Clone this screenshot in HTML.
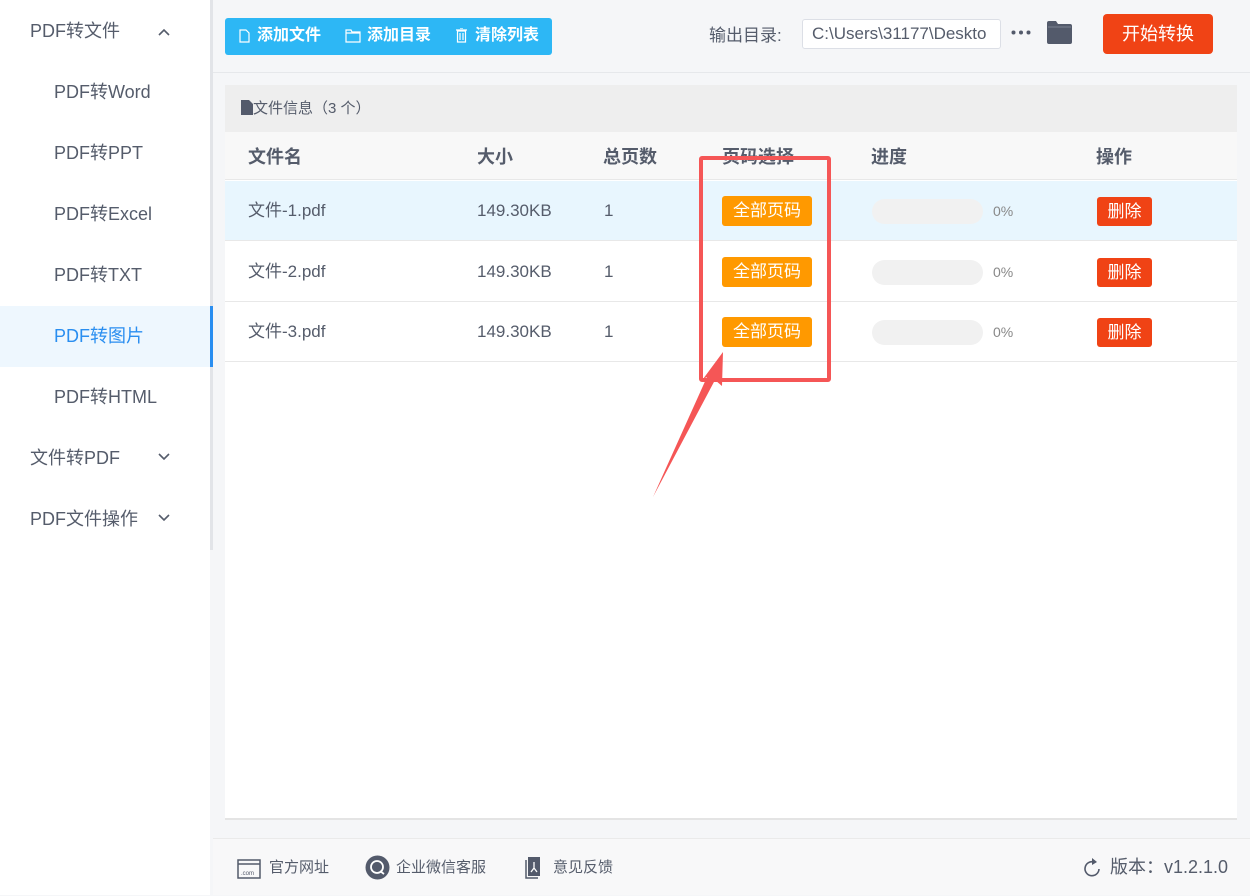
<!DOCTYPE html>
<html><head><meta charset="utf-8"><style>
*{margin:0;padding:0;box-sizing:border-box}
body{width:1250px;height:895px;overflow:hidden;background:#f5f6f8;font-family:"Liberation Sans","Noto Sans CJK SC",sans-serif;color:#555c6b;position:relative}
.side{position:absolute;left:0;top:0;width:210px;height:895px;background:#fff}
.sbar{position:absolute;left:210px;top:0;width:3px;height:550px;background:#e2e4e8}
.it{position:absolute;left:0;width:210px;height:61px;line-height:61px;font-size:18px;color:#555c6b}
.it.g{padding-left:30px}.it.s{padding-left:54px}
.it.a{background:#eef7fe;color:#2a8ef0}
.act{position:absolute;left:210px;top:306px;width:3px;height:61px;background:#2a8ef0}
.chev{position:absolute;left:158px;top:25px}
.abs{position:absolute}
.tb{left:225px;top:18px;width:327px;height:37px;background:#2db7f5;border-radius:3px;color:#fff;font-size:16px;font-weight:bold}
.tb span{position:absolute;top:8px;line-height:20px}
.hline{left:213px;top:72px;width:1037px;height:1px;background:#e6e8eb}
.panel{left:225px;top:85px;width:1012px;height:733px;background:#fff}
.ph{left:0;top:0;width:1012px;height:47px;background:#eeeeee;font-size:15px;line-height:47px;padding-left:16px}
.th{left:0;top:47px;width:1012px;height:48px;background:#f8f8f8;border-bottom:1px solid #e8e8e8;font-size:18px;font-weight:bold;line-height:50px}
.row{left:0;width:1012px;height:60px;border-bottom:1px solid #e8e8e8;font-size:17px;line-height:60px}
.c{position:absolute;top:0}
.tag{position:absolute;left:497px;top:15px;width:90px;height:30px;background:#ff9900;color:#fff;border-radius:3px;font-size:17px;line-height:30px;text-align:center}
.bar{position:absolute;left:647px;top:18px;width:111px;height:25px;border-radius:13px;background:#f1f1f1}
.pct{position:absolute;left:768px;font-size:14px;color:#888}
.del{position:absolute;left:872px;top:16px;width:55px;height:29px;background:#f04315;color:#fff;border-radius:3px;font-size:17px;line-height:29px;text-align:center}
.foot{left:213px;top:838px;width:1037px;height:57px;background:#f8f8f9;border-top:1px solid #eaeaea;font-size:15px;line-height:57px}
</style></head><body>
<div class="side">
<div class="it g" style="top:1px">PDF转文件<svg class="chev" style="top:27px" width="12" height="8" viewBox="0 0 12 8"><path d="M1 7l5-5 5 5" fill="none" stroke="#555c6b" stroke-width="1.6"/></svg></div>
<div class="it s" style="top:62px">PDF转Word</div>
<div class="it s" style="top:123px">PDF转PPT</div>
<div class="it s" style="top:184px">PDF转Excel</div>
<div class="it s" style="top:245px">PDF转TXT</div>
<div class="it s a" style="top:306px">PDF转图片</div>
<div class="it s" style="top:367px">PDF转HTML</div>
<div class="it g" style="top:428px">文件转PDF<svg class="chev" width="12" height="8" viewBox="0 0 12 8"><path d="M1 1l5 5 5-5" fill="none" stroke="#555c6b" stroke-width="1.6"/></svg></div>
<div class="it g" style="top:489px">PDF文件操作<svg class="chev" width="12" height="8" viewBox="0 0 12 8"><path d="M1 1l5 5 5-5" fill="none" stroke="#555c6b" stroke-width="1.6"/></svg></div>
</div>
<div class="sbar"></div><div class="act"></div>

<div class="abs tb">
<svg class="abs" style="left:14px;top:11px" width="11" height="14" viewBox="0 0 11 14"><path d="M1 1h6l3 3v9H1z" fill="none" stroke="#fff" stroke-width="1.2"/></svg><span style="left:32px">添加文件</span>
<svg class="abs" style="left:120px;top:11px" width="16" height="14" viewBox="0 0 16 14"><path d="M1 1h5l1 2h8v10H1z M1 4h14" fill="none" stroke="#fff" stroke-width="1.2"/></svg><span style="left:142px">添加目录</span>
<svg class="abs" style="left:231px;top:10px" width="11" height="15" viewBox="0 0 11 15"><path d="M0 2h11M4 0h3M1.5 3h8v11h-8zM4 5v7M7 5v7" fill="none" stroke="#fff" stroke-width="1.2"/></svg><span style="left:250px">清除列表</span>
</div>
<div class="abs" style="left:709px;top:21px;font-size:17px">输出目录:</div>
<div class="abs" style="left:802px;top:19px;width:199px;height:30px;background:#fff;border:1px solid #dcdfe6;border-radius:3px;font-size:17px;line-height:28px;padding-left:9px;overflow:hidden;white-space:nowrap">C:\Users\31177\Deskto</div>
<svg class="abs" style="left:1011px;top:30px" width="20" height="5" viewBox="0 0 20 5"><circle cx="2.5" cy="2.5" r="2" fill="#535a6b"/><circle cx="10" cy="2.5" r="2" fill="#535a6b"/><circle cx="17.5" cy="2.5" r="2" fill="#535a6b"/></svg>
<svg class="abs" style="left:1047px;top:21px" width="25" height="23" viewBox="0 0 25 23"><path d="M0 2q0-2 2-2h7l2 3h12q2 0 2 2v16q0 2-2 2H2q-2 0-2-2z" fill="#535a6b"/><path d="M1 6h23" stroke="#7b8190" stroke-width="1"/></svg>
<div class="abs" style="left:1103px;top:14px;width:110px;height:40px;background:#f04315;border-radius:4px;color:#fff;font-size:18px;line-height:40px;text-align:center">开始转换</div>
<div class="abs hline"></div>

<div class="abs panel">
<div class="abs ph"><svg style="vertical-align:-2px" width="12" height="15" viewBox="0 0 12 15"><path d="M0 0h8l4 4v11H0z" fill="#535a6b"/></svg>文件信息（3 个）</div>
<div class="abs th"><span class="c" style="left:23px">文件名</span><span class="c" style="left:252px">大小</span><span class="c" style="left:378px">总页数</span><span class="c" style="left:497px">页码选择</span><span class="c" style="left:646px">进度</span><span class="c" style="left:871px">操作</span></div>
<div class="abs row" style="top:96px;background:#e8f6fe"><span class="c" style="left:23px">文件-1.pdf</span><span class="c" style="left:252px">149.30KB</span><span class="c" style="left:379px">1</span><div class="tag">全部页码</div><div class="bar"></div><span class="pct">0%</span><div class="del">删除</div></div>
<div class="abs row" style="top:157px"><span class="c" style="left:23px">文件-2.pdf</span><span class="c" style="left:252px">149.30KB</span><span class="c" style="left:379px">1</span><div class="tag">全部页码</div><div class="bar"></div><span class="pct">0%</span><div class="del">删除</div></div>
<div class="abs row" style="top:217px"><span class="c" style="left:23px">文件-3.pdf</span><span class="c" style="left:252px">149.30KB</span><span class="c" style="left:379px">1</span><div class="tag">全部页码</div><div class="bar"></div><span class="pct">0%</span><div class="del">删除</div></div>
</div>
<div class="abs" style="left:225px;top:818px;width:1012px;height:2px;background:#e4e4e4"></div>

<svg class="abs" style="left:0;top:0" width="1250" height="895">
<rect x="701" y="158" width="128" height="222" fill="none" stroke="#f55656" stroke-width="4" rx="1"/>
<polygon points="653,497 707,377 703,379 723,352 722,386 715,380" fill="#f55656"/>
</svg>

<div class="abs foot">
<svg class="abs" style="left:24px;top:20px" width="24" height="20" viewBox="0 0 24 20"><rect x="1" y="1" width="22" height="18" fill="none" stroke="#535a6b" stroke-width="1.5"/><path d="M1 5h22" stroke="#535a6b" stroke-width="1.5"/><text x="4" y="16" font-size="6" fill="#535a6b" font-family="Liberation Sans">.com</text></svg>
<span class="abs" style="left:56px">官方网址</span>
<svg class="abs" style="left:152px;top:16px" width="25" height="25" viewBox="0 0 25 25"><circle cx="12.5" cy="12.5" r="12" fill="#535a6b"/><circle cx="12" cy="12" r="6" fill="none" stroke="#fff" stroke-width="1.8"/><path d="M15 16l4 3" stroke="#fff" stroke-width="1.8"/></svg>
<span class="abs" style="left:183px">企业微信客服</span>
<svg class="abs" style="left:312px;top:18px" width="18" height="22" viewBox="0 0 18 22"><path d="M3 0h12v19H3z" fill="#535a6b"/><path d="M1 3v18h12" fill="none" stroke="#535a6b" stroke-width="1.5"/><path d="M9 5v6l-3 4M9 11l3 4" stroke="#fff" stroke-width="1.3" fill="none"/></svg>
<span class="abs" style="left:340px">意见反馈</span>
<svg class="abs" style="left:870px;top:19px" width="18" height="20" viewBox="0 0 18 20"><path d="M11 4A7 7 0 1 0 16 11" fill="none" stroke="#535a6b" stroke-width="1.6"/><path d="M9 0l5 4-5 3z" fill="#535a6b"/></svg>
<span class="abs" style="left:897px;font-size:18px">版本：v1.2.1.0</span>
</div>
</body></html>
